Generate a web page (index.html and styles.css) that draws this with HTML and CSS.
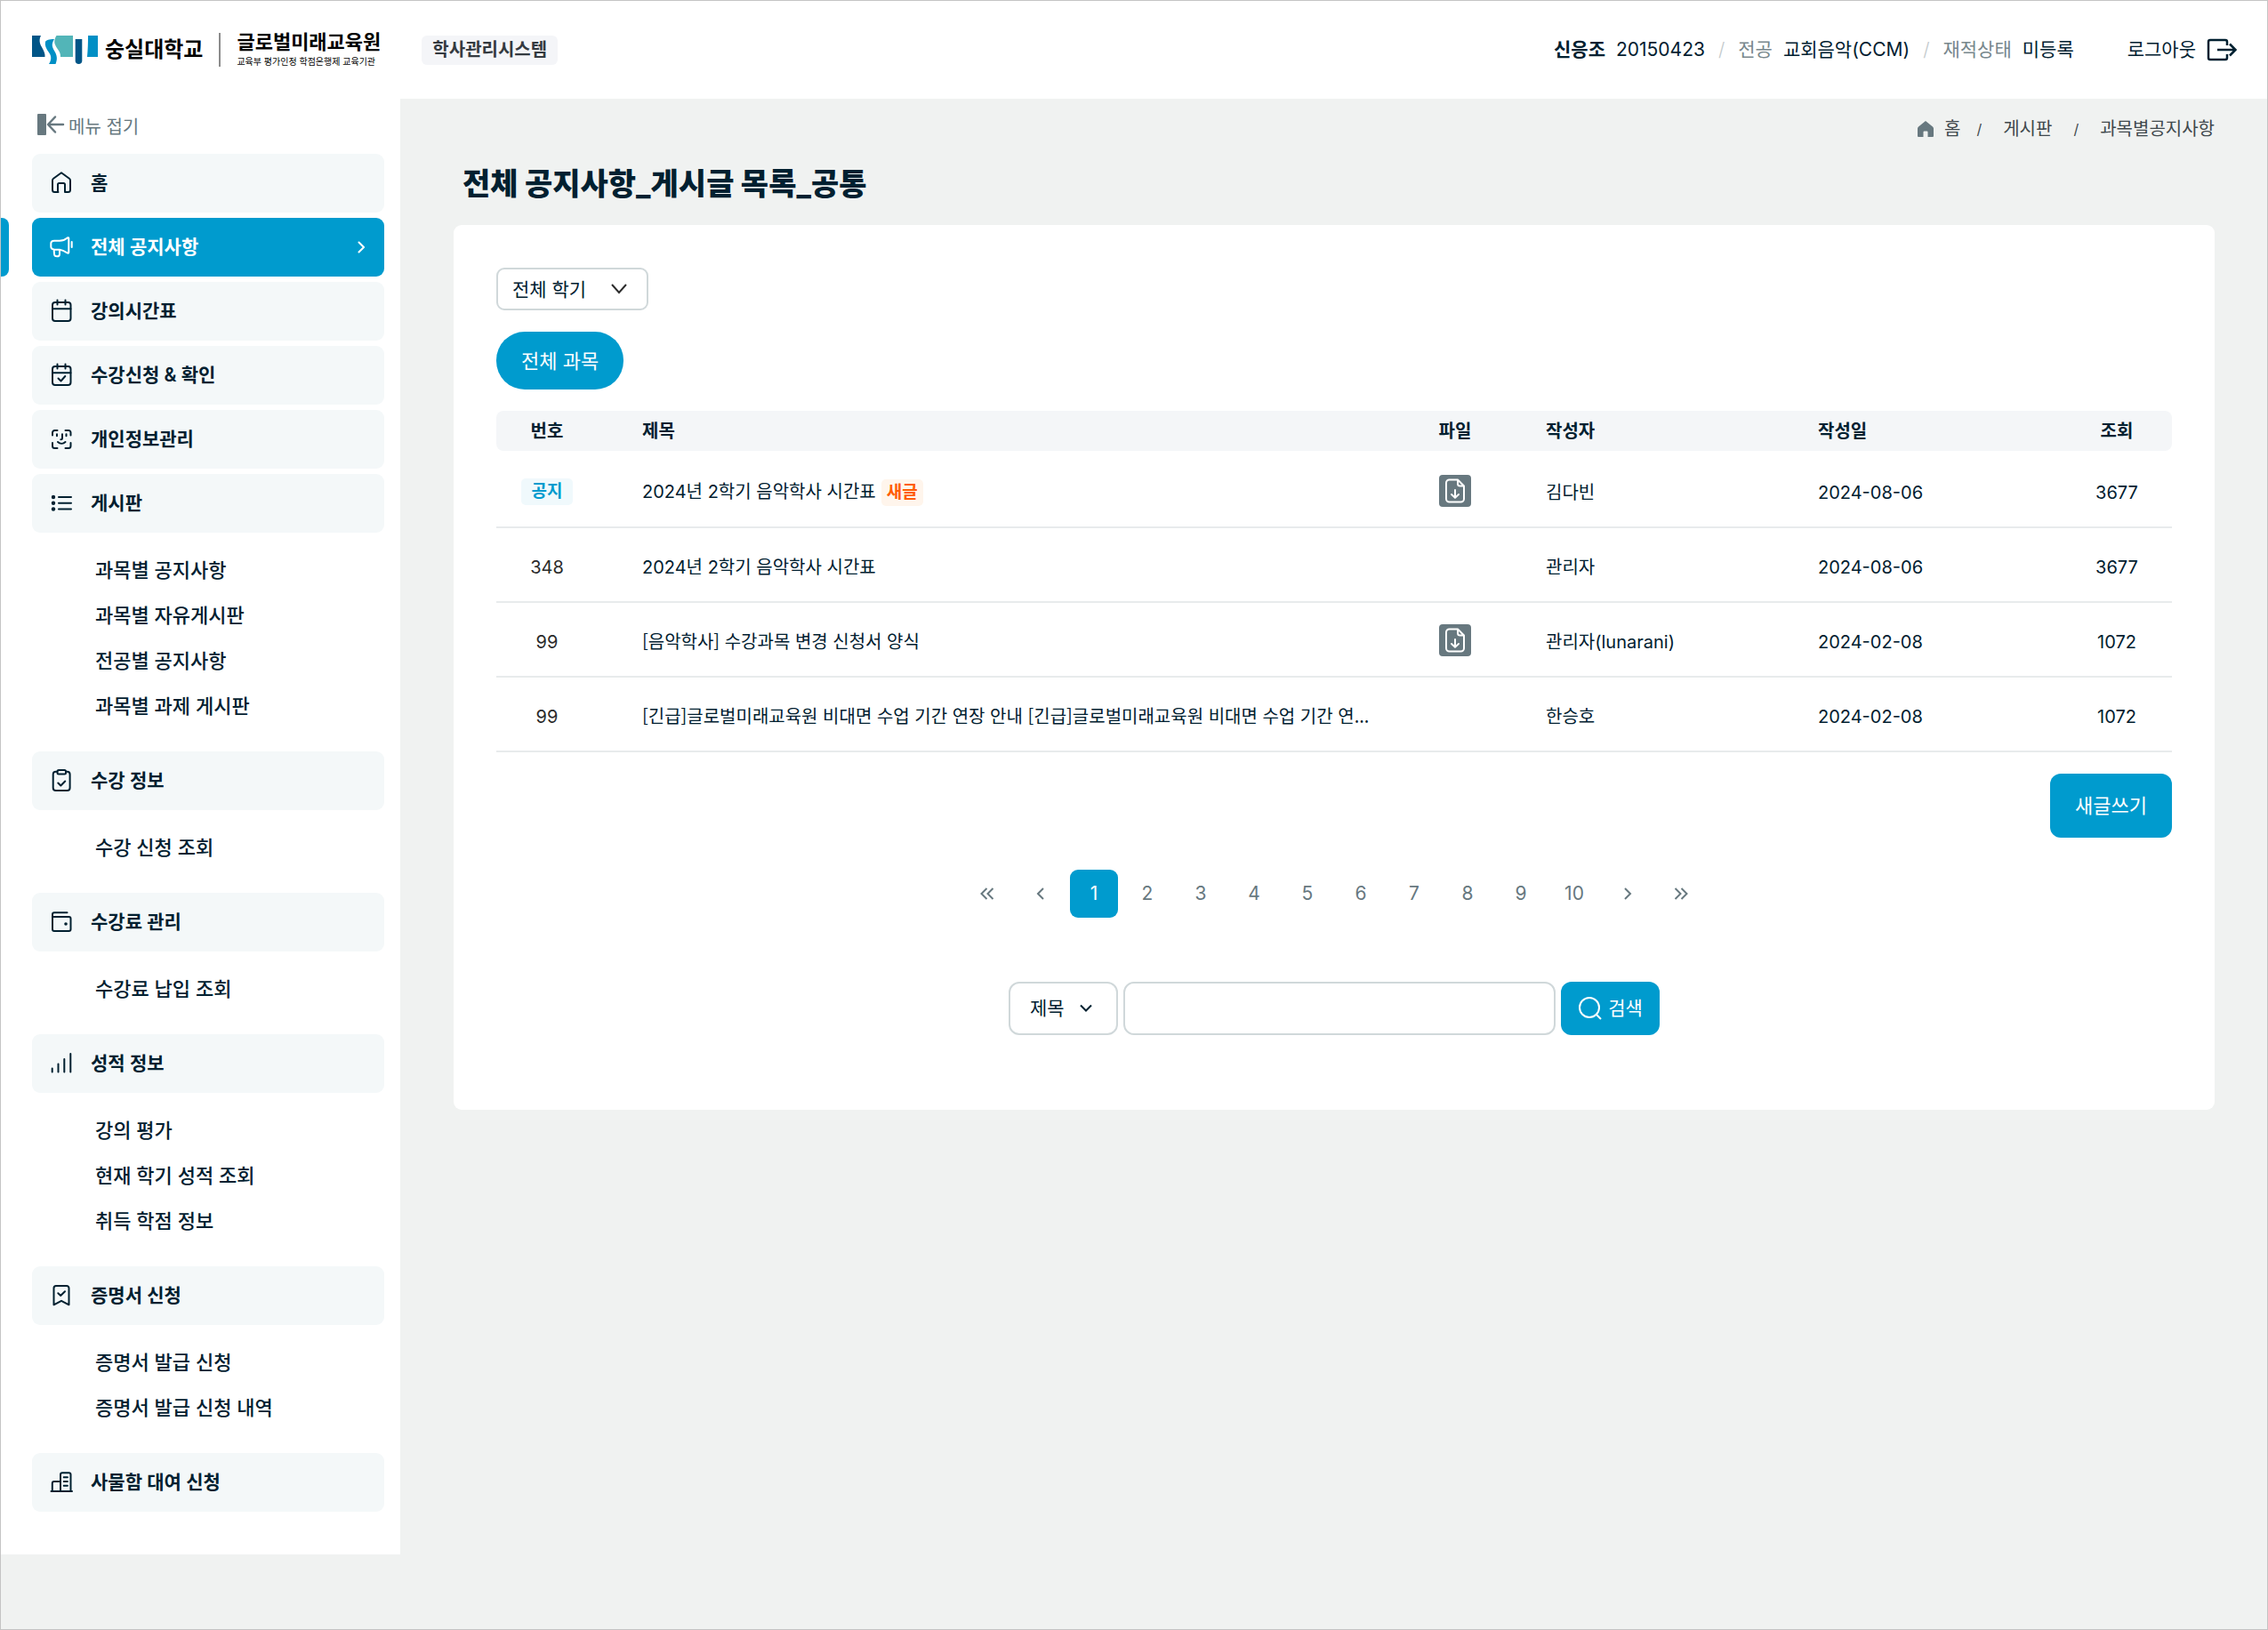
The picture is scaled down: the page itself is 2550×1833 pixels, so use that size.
FILE: index.html
```html
<!DOCTYPE html>
<html lang="ko">
<head>
<meta charset="utf-8">
<meta name="viewport" content="width=device-width, initial-scale=1">
<title>전체 공지사항 - 학사관리시스템</title>
<link rel="stylesheet" href="styles.css">
</head>
<body>
<header class="header">
  <a class="logo" href="#">
    <svg class="logo-mark" width="74" height="32" viewBox="0 0 74 32" aria-hidden="true">
      <path fill="#005587" d="M0 0h10C8 4 8 8 11 13c2 4 4 7 3.500 11H0z"/>
      <path fill="#008fc5" d="M15 7c1-2 4-3 10-3-3 5-3 8 0 13s4 9 1.500 15H19c3-5 3-9 0-13-3-4-5-8-4-12z"/>
      <path fill="#52b5b8" d="M27.500 0H46v24H32c0-4-1-6-4-10-3-5-4-8-.5-14z"/>
      <path fill="#005587" d="M48.700 4h7.600v24.500c0 2-1.500 3.500-3.800 3.500s-3.800-1.500-3.800-3.500z"/>
      <path fill="#008fc5" d="M63 0h11v24H62c.8-8 1-16 1-24z"/>
    </svg>
    <span class="logo-name">숭실대학교</span>
    <span class="logo-sub">
      <strong>글로벌미래교육원</strong>
      <small>교육부 평가인정 학점은행제 교육기관</small>
    </span>
  </a>
  <span class="system">학사관리시스템</span>
  <div class="user">
    <strong>신응조</strong>
    <span>20150423</span>
    <i class="slash">/</i>
    <span class="muted">전공</span>
    <span>교회음악(CCM)</span>
    <i class="slash">/</i>
    <span class="muted">재적상태</span>
    <span>미등록</span>
  </div>
  <button class="logout" type="button">로그아웃
    <svg width="34" height="26" viewBox="0 0 34 26" fill="none" stroke="currentColor" stroke-width="2.500" aria-hidden="true">
      <path d="M23 8V4a2 2 0 0 0-2-2H4a2 2 0 0 0-2 2v18a2 2 0 0 0 2 2h17a2 2 0 0 0 2-2v-4M12 13h20M26 6.500l6.500 6.500-6.500 6.500"/>
    </svg>
  </button>
</header>

<div class="layout">
  <nav class="sidebar" aria-label="주 메뉴">
    <button class="fold" type="button">
      <svg width="32" height="24" viewBox="0 0 32 24" aria-hidden="true">
        <rect width="10" height="24" rx="1" fill="currentColor"/>
        <path d="M29 12H13M20 3.500 12 12l8 8.500" fill="none" stroke="currentColor" stroke-width="2.500" stroke-linecap="round" stroke-linejoin="round"/>
      </svg>메뉴 접기
    </button>
    <ul class="menu">
      <li><a class="item" href="#">
        <svg class="icon" viewBox="0 0 30 30"><path d="M11.500 25H7.500A2.500 2.500 0 0 1 5 22.500V12c0-1 .4-1.700 1.100-2.200L15 3.300l8.900 6.500c.7.500 1.100 1.200 1.100 2.200v10.500a2.500 2.500 0 0 1-2.500 2.500h-3.500V16.500a1.500 1.500 0 0 0-1.500-1.500h-5a1.500 1.500 0 0 0-1.500 1.500V25"/></svg>홈</a></li>
      <li><a class="item active" href="#" aria-current="page">
        <svg class="icon" viewBox="0 0 30 30"><path d="M7 7.700h6c3.500 0 6-1 8.800-3.300.7-.5 1.500-.2 1.500.7v15.600c0 .8-.8 1.200-1.500.8-3-2-5-3.400-8.800-3.800v5c0 3.500-5.800 3.500-6 0l-.4-5.200c-2-.2-3.300-1.300-3.300-3v-4c0-2 1.500-2.800 3.700-2.800zM26.700 9v6M13 17.700H7"/></svg>전체 공지사항
        <svg class="arrow" width="8" height="14" viewBox="0 0 8 14"><path d="M1.500 1.500 7 7l-5.500 5.500"/></svg></a></li>
      <li><a class="item" href="#">
        <svg class="icon" viewBox="0 0 30 30"><rect x="5" y="5" width="20.500" height="21" rx="3"/><path d="M5 12.300h20.500M10.500 2.500v5M19.500 2.500v5"/></svg>강의시간표</a></li>
      <li><a class="item" href="#">
        <svg class="icon" viewBox="0 0 30 30"><rect x="5" y="5" width="20.500" height="21" rx="3"/><path d="M5 12.300h20.500M10.500 2.500v5M19.500 2.500v5M11.500 18.500l3 3 4.800-5.500"/></svg>수강신청 &amp; 확인</a></li>
      <li><a class="item" href="#">
        <svg class="icon" viewBox="0 0 30 30"><path d="M5 10.500V7.500A2.500 2.500 0 0 1 7.500 5h3M19.500 5h3A2.500 2.500 0 0 1 25.500 7.500v3M25.500 19v3.500a2.500 2.500 0 0 1-2.500 2.500h-3.500M10.500 25h-3A2.500 2.500 0 0 1 5 22.500V19M10 9.300v2M20.500 9.300v2M16 9.300v4.500c0 1-.6 1.500-1.700 1.500M11 18c2.500 2.400 6 2.400 8.500 0"/></svg>개인정보관리</a></li>
      <li><a class="item" href="#">
        <svg class="icon" viewBox="0 0 30 30"><path d="M12 8h14M12 14.700h14M12 21.500h14"/><g fill="currentColor" stroke="none"><circle cx="6" cy="8" r="2.200"/><circle cx="6" cy="14.700" r="2.200"/><circle cx="6" cy="21.500" r="2.200"/></g></svg>게시판</a>
        <ul class="sub">
          <li><a href="#">과목별 공지사항</a></li>
          <li><a href="#">과목별 자유게시판</a></li>
          <li><a href="#">전공별 공지사항</a></li>
          <li><a href="#">과목별 과제 게시판</a></li>
        </ul></li>
      <li><a class="item" href="#">
        <svg class="icon" viewBox="0 0 30 30"><path d="M10.500 4.700H8.700a3 3 0 0 0-3 3V23a3 3 0 0 0 3 3h12.900a3 3 0 0 0 3-3V7.700a3 3 0 0 0-3-3H20M11.300 17.500l3 3 4.900-5"/><rect x="10.500" y="3" width="9.500" height="4.500" rx="1.500"/></svg>수강 정보</a>
        <ul class="sub"><li><a href="#">수강 신청 조회</a></li></ul></li>
      <li><a class="item" href="#">
        <svg class="icon" viewBox="0 0 30 30"><path d="M21.500 4.300H7a2 2 0 0 0-2 2V23a2 2 0 0 0 2 2h16.500a2 2 0 0 0 2-2V11a2 2 0 0 0-2-2H5"/><circle cx="20" cy="17" r="1.800" fill="currentColor" stroke="none"/></svg>수강료 관리</a>
        <ul class="sub"><li><a href="#">수강료 납입 조회</a></li></ul></li>
      <li><a class="item" href="#">
        <svg class="icon" viewBox="0 0 30 30"><path d="M4.700 20.500V24.500M11.500 15.500v9M18.300 10v14.500M25.300 4v20.500"/></svg>성적 정보</a>
        <ul class="sub">
          <li><a href="#">강의 평가</a></li>
          <li><a href="#">현재 학기 성적 조회</a></li>
          <li><a href="#">취득 학점 정보</a></li>
        </ul></li>
      <li><a class="item" href="#">
        <svg class="icon" viewBox="0 0 30 30"><path d="M6.500 25.300V6.500a2.500 2.500 0 0 1 2.500-2.500h12a2.500 2.500 0 0 1 2.500 2.500v18.800L15 20.800zM11.300 12.300l2.900 2.700 4.800-4.700"/></svg>증명서 신청</a>
        <ul class="sub">
          <li><a href="#">증명서 발급 신청</a></li>
          <li><a href="#">증명서 발급 신청 내역</a></li>
        </ul></li>
      <li><a class="item" href="#">
        <svg class="icon" viewBox="0 0 30 30"><path d="M3.500 25h23.500M4.800 25V16a2 2 0 0 1 2-2H14M14 25V6.300a2 2 0 0 1 2-2h7.500a2 2 0 0 1 2 2V25M17.700 9.300h4.200M17.700 14h4.200M17.700 18.800h4.200"/></svg>사물함 대여 신청</a></li>
    </ul>
  </nav>

  <main class="main">
    <nav class="crumbs" aria-label="현재 위치">
      <a href="#"><svg width="18" height="18" viewBox="0 0 18 18" aria-hidden="true"><path fill="#67787f" d="M9 0 1 6.500c-.6.500-1 1.200-1 2V17a1 1 0 0 0 1 1h5.500v-5.500a1 1 0 0 1 1-1h3a1 1 0 0 1 1 1V18H17a1 1 0 0 0 1-1V8.500c0-.8-.4-1.500-1-2z"/></svg>홈</a>
      <i>/</i>
      <a href="#">게시판</a>
      <i>/</i>
      <a href="#">과목별공지사항</a>
    </nav>
    <h1>전체 공지사항_게시글 목록_공통</h1>

    <section class="card">
      <div class="select term">
        <select aria-label="학기"><option>전체 학기</option></select>
        <svg width="20" height="12" viewBox="0 0 20 12" stroke="#2b2b2b" aria-hidden="true"><path d="M2 1l8 9 8-9"/></svg>
      </div>
      <button class="pill" type="button">전체 과목</button>

      <table class="board">
        <colgroup><col class="c-no"><col><col class="c-file"><col class="c-writer"><col class="c-date"><col class="c-hits"></colgroup>
        <thead>
          <tr><th class="mid">번호</th><th>제목</th><th class="mid">파일</th><th>작성자</th><th>작성일</th><th class="mid">조회</th></tr>
        </thead>
        <tbody>
          <tr>
            <td class="mid media"><span class="tag notice">공지</span></td>
            <td><a href="#">2024년 2학기 음악학사 시간표</a><span class="tag new">새글</span></td>
            <td class="mid media"><a class="file" href="#" aria-label="첨부파일"><svg width="36" height="36" viewBox="0 0 36 36"><rect width="36" height="36" rx="4" fill="#67787f"/><path d="M21 5.500h-9.500A3.500 3.500 0 0 0 8 9v18a3.500 3.500 0 0 0 3.500 3.500h13A3.500 3.500 0 0 0 28 27V12.500L21 5.500V10a2.500 2.500 0 0 0 2.500 2.500H28M18 17v8.500M14 22l4 3.700 4-3.700"/></svg></a></td>
            <td>김다빈</td><td>2024-08-06</td><td class="mid">3677</td>
          </tr>
          <tr>
            <td class="mid no">348</td>
            <td><a href="#">2024년 2학기 음악학사 시간표</a></td>
            <td></td>
            <td>관리자</td><td>2024-08-06</td><td class="mid">3677</td>
          </tr>
          <tr>
            <td class="mid no">99</td>
            <td><a class="ko" href="#">[음악학사] 수강과목 변경 신청서 양식</a></td>
            <td class="mid media"><a class="file" href="#" aria-label="첨부파일"><svg width="36" height="36" viewBox="0 0 36 36"><rect width="36" height="36" rx="4" fill="#67787f"/><path d="M21 5.500h-9.500A3.500 3.500 0 0 0 8 9v18a3.500 3.500 0 0 0 3.500 3.500h13A3.500 3.500 0 0 0 28 27V12.500L21 5.500V10a2.500 2.500 0 0 0 2.500 2.500H28M18 17v8.500M14 22l4 3.700 4-3.700"/></svg></a></td>
            <td>관리자(lunarani)</td><td>2024-02-08</td><td class="mid">1072</td>
          </tr>
          <tr>
            <td class="mid no">99</td>
            <td><a class="ko" href="#">[긴급]글로벌미래교육원 비대면 수업 기간 연장 안내 [긴급]글로벌미래교육원 비대면 수업 기간 연...</a></td>
            <td></td>
            <td>한승호</td><td>2024-02-08</td><td class="mid">1072</td>
          </tr>
        </tbody>
      </table>

      <button class="write" type="button">새글쓰기</button>

      <nav class="pages" aria-label="페이지">
        <a href="#" aria-label="처음"><svg width="16" height="14" viewBox="0 0 16 14"><path d="M7.500 1l-6 6 6 6M14.500 1l-6 6 6 6"/></svg></a>
        <a href="#" aria-label="이전"><svg width="16" height="14" viewBox="0 0 16 14"><path d="M11 1L5 7l6 6"/></svg></a>
        <a class="on" href="#" aria-current="page">1</a>
        <a href="#">2</a><a href="#">3</a><a href="#">4</a><a href="#">5</a><a href="#">6</a><a href="#">7</a><a href="#">8</a><a href="#">9</a><a href="#">10</a>
        <a href="#" aria-label="다음"><svg width="16" height="14" viewBox="0 0 16 14"><path d="M5 1l6 6-6 6"/></svg></a>
        <a href="#" aria-label="마지막"><svg width="16" height="14" viewBox="0 0 16 14"><path d="M1.500 1l6 6-6 6M8.500 1l6 6-6 6"/></svg></a>
      </nav>

      <form class="search">
        <div class="select field">
          <select aria-label="검색 항목"><option>제목</option></select>
          <svg width="16" height="10" viewBox="0 0 16 10" stroke="#012030" aria-hidden="true"><path d="M2 1.500l6 6 6-6"/></svg>
        </div>
        <input type="text" aria-label="검색어">
        <button type="submit"><svg width="28" height="28" viewBox="0 0 28 28" aria-hidden="true"><circle cx="13" cy="13" r="11"/><path d="M21 21l5 5"/></svg>검색</button>
      </form>
    </section>
  </main>
</div>
</body>
</html>
```
FILE: styles.css
```css
* { box-sizing: border-box; }

body {
  margin: 0;
  min-height: 100vh;
  border: 1px solid #c4c4c4;
  background: #f0f2f1;
  color: #012030;
  font-family: Inter, "Noto Sans CJK KR", sans-serif;
  font-size: 21px;
  line-height: 30px;
}

a { color: inherit; text-decoration: none; }
i { font-style: normal; }
ul { margin: 0; padding: 0; list-style: none; }
svg { display: block; flex: none; }
button, input, select { margin: 0; border: 0; font: inherit; color: inherit; }
button { background: none; padding: 0; cursor: pointer; }

/* header */
.header {
  display: flex;
  align-items: center;
  height: 110px;
  padding: 0 34px 0 35px;
  background: #fff;
}
.logo { display: flex; align-items: center; color: #000; }
.logo-name { margin-left: 8px; font-size: 24px; font-weight: 700; }
.logo-sub {
  display: flex;
  flex-direction: column;
  gap: 6px;
  margin-left: 18px;
  padding-left: 18px;
  border-left: 2px solid #8c8c8c;
}
.logo-sub strong { font-size: 22px; line-height: 20px; }
.logo-sub small { font-size: 10px; line-height: 12px; }
.system {
  margin-left: 46px;
  padding: 1px 12px 2px;
  border-radius: 6px;
  background: #f4f5f8;
  color: #343a40;
  font-size: 20px;
  font-weight: 600;
}
.user { display: flex; gap: 12px; margin-left: auto; }
.muted { color: #78878d; }
.slash { padding: 0 3px; color: #c3cacc; font-weight: 300; }
.logout { display: flex; align-items: center; gap: 12px; margin-left: 60px; }

/* sidebar */
.layout { display: flex; align-items: flex-start; }
.sidebar {
  flex: 0 0 449px;
  padding: 17px 18px 48px 35px;
  background: #fff;
}
.fold {
  display: flex;
  align-items: flex-start;
  gap: 3px;
  margin: 0 0 15px 6px;
  color: #67787f;
  font-size: 20px;
}
.menu { display: flex; flex-direction: column; gap: 6px; }
.item {
  position: relative;
  display: flex;
  align-items: center;
  gap: 18px;
  height: 66px;
  padding: 0 22px 0 18px;
  border-radius: 9px;
  background: #f4f8f9;
  font-weight: 600;
}
.icon {
  width: 30px;
  height: 30px;
  fill: none;
  stroke: currentColor;
  stroke-width: 2;
  stroke-linecap: round;
  stroke-linejoin: round;
}
.active { background: #009bce; color: #fff; }
.active::before {
  content: "";
  position: absolute;
  top: 0;
  left: -35px;
  width: 9px;
  height: 100%;
  border-radius: 0 8px 8px 0;
  background: #009bce;
}
.arrow {
  margin-left: auto;
  fill: none;
  stroke: currentColor;
  stroke-width: 2;
  stroke-linecap: round;
}
.sub { padding: 17px 0 19px 71px; font-size: 22px; font-weight: 500; }
.sub a { display: block; line-height: 51px; }

/* content */
.main { flex: 1; min-width: 0; padding: 19px 59px 60px 60px; }
.crumbs {
  display: flex;
  justify-content: flex-end;
  align-items: center;
  color: #40494d;
  font-size: 20px;
}
.crumbs a { display: flex; align-items: center; gap: 12px; }
.crumbs i { padding: 0 24px; font-size: 16px; }
.crumbs a:first-child + i { padding-left: 18px; }
h1 {
  margin: 23px 0 22px 10px;
  font-size: 34px;
  font-weight: 800;
  line-height: 48px;
}
.card {
  display: flex;
  flex-direction: column;
  padding: 48px 48px 84px;
  border-radius: 9px;
  background: #fff;
}

.select { display: grid; align-items: center; }
.select > * { grid-area: 1 / 1; }
.select select {
  width: 100%;
  height: 100%;
  border: 2px solid #d0d8da;
  background: #fff;
  appearance: none;
}
.select svg { justify-self: end; fill: none; stroke-width: 2; pointer-events: none; }
.term { width: 171px; height: 48px; }
.term select { padding: 2px 16px 0; border-radius: 9px; }
.term svg { margin-right: 23px; }

.pill {
  align-self: flex-start;
  height: 65px;
  margin: 24px 0;
  padding: 0 28px;
  border-radius: 32px;
  background: #009bce;
  color: #fff;
  font-size: 22px;
}

.board {
  width: 100%;
  table-layout: fixed;
  border-collapse: separate;
  border-spacing: 0;
  font-size: 20px;
}
.c-no { width: 114px; }
.c-file { width: 104px; }
.c-writer { width: 306px; }
.c-date { width: 324px; }
.c-hits { width: 124px; }
.board th {
  height: 45px;
  padding: 1px 0 0 50px;
  background: #f4f6f8;
  font-weight: 600;
  text-align: left;
}
.board th:first-child { border-radius: 8px 0 0 8px; }
.board th:last-child { border-radius: 0 8px 8px 0; }
.board td {
  height: 84px;
  padding: 5px 0 0 50px;
  border-bottom: 2px solid #e8ebec;
  white-space: nowrap;
}
.board td.media { padding-top: 2px; }
.board tbody tr:first-child td { height: 87px; padding-top: 8px; }
.board tbody tr:first-child td.media { padding-top: 5px; }
.board .mid { padding-left: 0; text-align: center; }
.board .no { color: #2b2b2b; }
.ko { font-family: "Noto Sans CJK KR", sans-serif; }
.tag {
  display: inline-block;
  border-radius: 5px;
  font-size: 19px;
  font-weight: 600;
}
.notice { padding: 0 12px; background: #f0f9fc; color: #009bce; }
.new { margin-left: 6px; padding: 0 6px; background: #fff5ec; color: #ff5c00; }
.file { display: inline-block; vertical-align: middle; }
.file path {
  fill: none;
  stroke: #fff;
  stroke-width: 2;
  stroke-linecap: round;
  stroke-linejoin: round;
}

.write {
  align-self: flex-end;
  height: 72px;
  margin: 24px 0 36px;
  padding: 0 28px;
  border-radius: 12px;
  background: #009bce;
  color: #fff;
  font-size: 22px;
}

.pages { display: flex; justify-content: center; gap: 6px; color: #67787f; }
.pages a {
  display: flex;
  align-items: center;
  justify-content: center;
  width: 54px;
  height: 54px;
  border-radius: 9px;
}
.pages .on { background: #009bce; color: #fff; }
.pages path { fill: none; stroke: currentColor; stroke-width: 2; }

.search { display: flex; justify-content: center; gap: 6px; margin-top: 72px; }
.field { width: 123px; height: 60px; }
.field select { padding: 0 22px; border-radius: 12px; }
.field svg { margin-right: 28px; }
.search input {
  width: 486px;
  height: 60px;
  padding: 0 18px;
  border: 2px solid #d0d8da;
  border-radius: 12px;
}
.search button {
  display: flex;
  align-items: center;
  justify-content: center;
  gap: 6px;
  width: 111px;
  height: 60px;
  border-radius: 12px;
  background: #009bce;
  color: #fff;
}
.search button svg { fill: none; stroke: #fff; stroke-width: 2; }
```
